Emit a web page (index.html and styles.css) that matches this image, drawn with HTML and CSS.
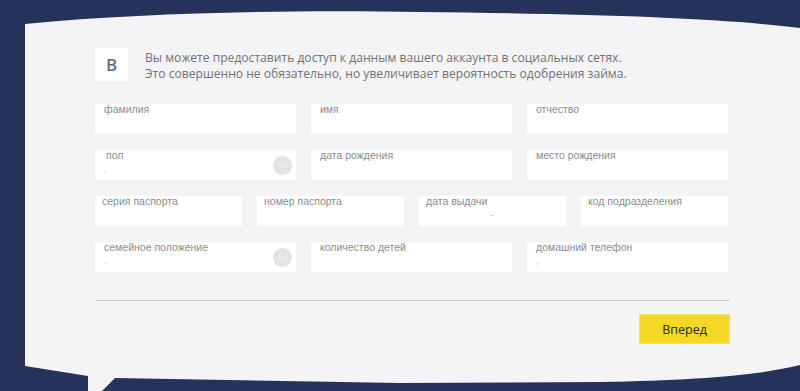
FILE: index.html
```html
<!DOCTYPE html>
<html lang="ru">
<head>
<meta charset="utf-8">
<title>Анкета</title>
<link rel="stylesheet" href="styles.css">
</head>
<body>
<svg class="card-bg" width="800" height="391" viewBox="0 0 800 391" aria-hidden="true">
  <path d="M25,24 C150,12 300,10 420,12 C600,14 720,18 800,28 L800,365 C760,375 700,380 600,382 L400,383 L115,378 L102,391 L88,391 L88,376 L25,366 Z" fill="#f4f4f6"/>
</svg>
<main class="content">
  <div class="intro">
    <div class="vk">B</div>
    <p class="intro-text">Вы можете предоставить доступ к данным вашего аккаунта в социальных сетях.<br>Это совершенно не обязательно, но увеличивает вероятность одобрения займа.</p>
  </div>
  <div class="form">
    <div class="row row-3">
      <div class="field"><span class="label">фамилия</span></div>
      <div class="field"><span class="label">имя</span></div>
      <div class="field"><span class="label">отчество</span></div>
    </div>
    <div class="row row-3">
      <div class="field field-select"><span class="label label-in">пол</span><span class="value">.</span><span class="select-btn"><svg width="9" height="6" viewBox="0 0 9 6"><path d="M1 1 L4.5 4.5 L8 1" fill="none" stroke="#f0f0f2" stroke-width="1.2"/></svg></span></div>
      <div class="field"><span class="label">дата рождения</span></div>
      <div class="field"><span class="label">место рождения</span></div>
    </div>
    <div class="row row-4">
      <div class="field field-tight"><span class="label">серия паспорта</span></div>
      <div class="field field-tight"><span class="label">номер паспорта</span></div>
      <div class="field field-tight"><span class="label">дата выдачи</span><span class="value value-center">-</span></div>
      <div class="field field-tight"><span class="label">код подразделения</span></div>
    </div>
    <div class="row row-3">
      <div class="field field-select"><span class="label">семейное положение</span><span class="value">.</span><span class="select-btn"><svg width="9" height="6" viewBox="0 0 9 6"><path d="M1 1 L4.5 4.5 L8 1" fill="none" stroke="#f0f0f2" stroke-width="1.2"/></svg></span></div>
      <div class="field"><span class="label">количество детей</span></div>
      <div class="field"><span class="label">домашний телефон</span><span class="value">,</span></div>
    </div>
  </div>
  <hr class="divider">
  <div class="actions">
    <button class="btn-next" type="button">Вперед</button>
  </div>
</main>
</body>
</html>
```

FILE: styles.css
```css
html, body {
  margin: 0;
  padding: 0;
}
body {
  width: 800px;
  height: 391px;
  overflow: hidden;
  background: #253259;
  position: relative;
  font-family: "Open Sans", "Noto Sans", sans-serif;
}
.card-bg {
  position: absolute;
  left: 0;
  top: 0;
  z-index: 0;
}
.content {
  position: relative;
  z-index: 1;
  width: 635px;
  padding: 48px 0 0 95px;
}
.intro {
  display: flex;
  align-items: flex-start;
  gap: 17px;
}
.vk {
  width: 33px;
  height: 33px;
  background: #ffffff;
  color: #5f6f86;
  font-family: "Open Sans", sans-serif;
  font-size: 17px;
  font-weight: 600;
  display: flex;
  align-items: center;
  justify-content: center;
}
.intro-text {
  margin: 2px 0 0;
  font-size: 12.1px;
  line-height: 16px;
  color: #727272;
}
.form {
  margin-top: 22px;
  display: flex;
  flex-direction: column;
  gap: 16px;
}
.row {
  display: grid;
  gap: 15px;
}
.row-3 {
  grid-template-columns: 201px 201px 201px;
}
.row-4 {
  grid-template-columns: 147px 147px 147px 147px;
}
.field {
  position: relative;
  height: 30px;
  background: #ffffff;
  padding: 0 9px;
  box-sizing: border-box;
}
.field-tight {
  padding: 0 7px;
}
.label {
  display: block;
  font-family: "Liberation Sans", sans-serif;
  font-size: 10.5px;
  line-height: 12px;
  color: #8c8c8c;
  margin-top: -1px;
}
.label-in {
  padding-left: 2px;
}
.value {
  display: block;
  margin-top: 3px;
  font-family: "Liberation Sans", sans-serif;
  font-size: 9px;
  line-height: 10px;
  color: #b8b8b8;
}
.value-center {
  text-align: center;
}
.select-btn {
  position: absolute;
  right: 4px;
  top: 6px;
  width: 19px;
  height: 19px;
  border-radius: 50%;
  background: #e3e3e5;
  display: flex;
  align-items: center;
  justify-content: center;
}
.divider {
  margin: 28px 0 0;
  border: 0;
  height: 1px;
  background: #c9c9cb;
  width: 635px;
}
.actions {
  display: flex;
  justify-content: flex-end;
  margin-top: 13px;
}
.btn-next {
  width: 91px;
  height: 30px;
  background: #f4d823;
  border: 1px solid #f6e06a;
  color: #2a2a2a;
  font-family: "Open Sans", sans-serif;
  font-size: 12.5px;
  padding: 0;
  cursor: pointer;
}
```
